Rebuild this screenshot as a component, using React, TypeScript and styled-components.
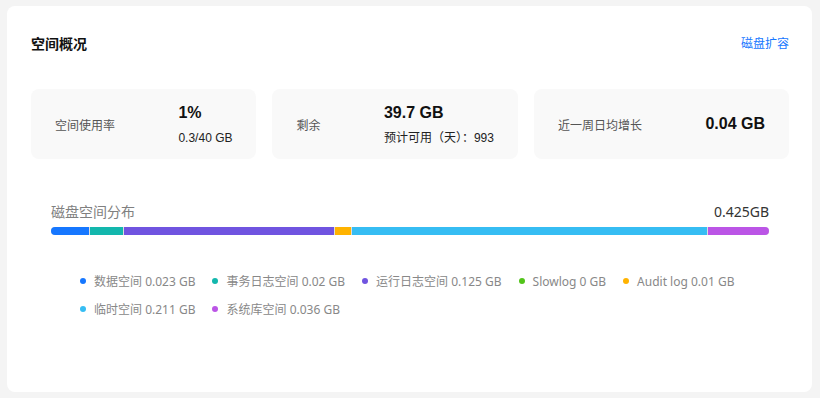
import React from "react";
import styled, { createGlobalStyle } from "styled-components";

const GlobalStyle = createGlobalStyle`
  html, body { margin: 0; padding: 0; background: #f4f4f4; }
  body { font-family: "Liberation Sans", "Noto Sans CJK SC", sans-serif; }
  * { box-sizing: border-box; }
`;

const Page = styled.div`
  padding: 6px 8px 6px 7px;
`;

const Card = styled.div`
  background: #ffffff;
  border-radius: 8px;
  min-height: 386px;
  padding: 30px 23px 24px 24px;
  display: flex;
  flex-direction: column;
`;

const Header = styled.div`
  display: flex;
  align-items: center;
  justify-content: space-between;
  height: 14px;
  margin-bottom: 39px;
`;

const Title = styled.h2`
  margin: 0;
  font-size: 14px;
  line-height: 14px;
  font-weight: 700;
  color: #111;
  font-family: "Noto Sans CJK SC", sans-serif;
`;

const LinkButton = styled.a`
  font-size: 12px;
  line-height: 14px;
  color: #1677ff;
  text-decoration: none;
  font-family: "Noto Sans CJK SC", sans-serif;
  cursor: pointer;
`;

const StatRow = styled.div`
  display: flex;
  gap: 16px;
`;

const StatCard = styled.div`
  flex: 1 1 auto;
  height: 70px;
  background: #f9f9f9;
  border-radius: 8px;
  padding: 0 24px;
  display: flex;
  align-items: center;
  justify-content: space-between;
  gap: 56px;
  white-space: nowrap;
`;

const StatLabel = styled.span`
  font-size: 12px;
  color: #555;
  font-family: "Noto Sans CJK SC", sans-serif;
`;

const StatValue = styled.div`
  display: flex;
  flex-direction: column;
  gap: 7px;
`;

const BigNumber = styled.span`
  font-size: 16px;
  line-height: 20px;
  font-weight: 700;
  color: #111;
`;

const SubText = styled.span`
  font-size: 12px;
  line-height: 16px;
  color: #222;
`;

const Distribution = styled.div`
  margin-top: 42px;
  padding: 0 20px;
`;

const DistHead = styled.div`
  display: flex;
  justify-content: space-between;
  align-items: center;
  height: 20px;
  margin-bottom: 6px;
  font-family: "Noto Sans", "Noto Sans CJK SC", sans-serif;
`;

const DistTitle = styled.span`
  font-size: 14px;
  color: #808080;
  font-family: "Noto Sans CJK SC", sans-serif;
`;

const DistTotal = styled.span`
  font-size: 14px;
  color: #333;
`;

const Bar = styled.div`
  display: flex;
  gap: 1px;
  height: 8px;
  border-radius: 4px;
  overflow: hidden;
  background: #dcdcdc;
`;

const Segment = styled.div<{ $color: string }>`
  background: ${(p) => p.$color};
  flex-shrink: 0;
`;

const Legend = styled.div`
  display: flex;
  flex-wrap: wrap;
  row-gap: 8px;
  column-gap: 17px;
  margin-top: 36px;
  padding: 0 0 0 29px;
  max-width: 718px;
`;

const LegendItem = styled.div`
  display: flex;
  align-items: center;
  gap: 8px;
  height: 20px;
  font-size: 12px;
  color: #888;
  font-family: "Noto Sans", "Noto Sans CJK SC", sans-serif;
  white-space: nowrap;
`;

const Dot = styled.span<{ $color: string }>`
  width: 6px;
  height: 6px;
  border-radius: 50%;
  background: ${(p) => p.$color};
`;

const items = [
  { name: "数据空间", value: 0.023, color: "#1677ff" },
  { name: "事务日志空间", value: 0.02, color: "#13b7ad" },
  { name: "运行日志空间", value: 0.125, color: "#7054e0" },
  { name: "Slowlog", value: 0, color: "#52c41a" },
  { name: "Audit log", value: 0.01, color: "#ffb300" },
  { name: "临时空间", value: 0.211, color: "#36bdf3" },
  { name: "系统库空间", value: 0.036, color: "#bb55e6" },
];

const total = 0.425;

export default function App() {
  const visible = items.filter((i) => i.value > 0);
  return (
    <Page>
      <GlobalStyle />
      <Card>
        <Header>
          <Title>空间概况</Title>
          <LinkButton>磁盘扩容</LinkButton>
        </Header>
        <StatRow>
          <StatCard>
            <StatLabel>空间使用率</StatLabel>
            <StatValue>
              <BigNumber>1%</BigNumber>
              <SubText>0.3/40 GB</SubText>
            </StatValue>
          </StatCard>
          <StatCard>
            <StatLabel>剩余</StatLabel>
            <StatValue>
              <BigNumber>39.7 GB</BigNumber>
              <SubText>预计可用（天）：993</SubText>
            </StatValue>
          </StatCard>
          <StatCard>
            <StatLabel>近一周日均增长</StatLabel>
            <BigNumber>0.04 GB</BigNumber>
          </StatCard>
        </StatRow>
        <Distribution>
          <DistHead>
            <DistTitle>磁盘空间分布</DistTitle>
            <DistTotal>0.425GB</DistTotal>
          </DistHead>
          <Bar>
            {visible.map((i, idx) => (
              <Segment
                key={i.name}
                $color={i.color}
                style={
                  idx === visible.length - 1
                    ? { flexGrow: 1 }
                    : { width: `calc(${(i.value / total) * 100}% - 1px)` }
                }
              />
            ))}
          </Bar>
          <Legend>
            {items.map((i) => (
              <LegendItem key={i.name}>
                <Dot $color={i.color} />
                <span>
                  {i.name} {i.value} GB
                </span>
              </LegendItem>
            ))}
          </Legend>
        </Distribution>
      </Card>
    </Page>
  );
}
